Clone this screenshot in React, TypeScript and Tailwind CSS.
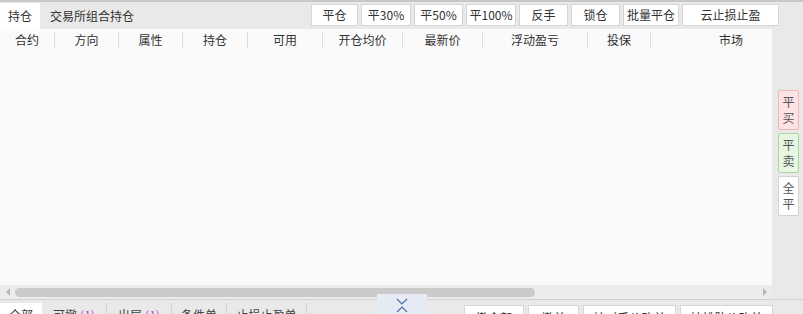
const cols = [
  { label: '合约', w: 'w-[55px]' },
  { label: '方向', w: 'w-[64px]' },
  { label: '属性', w: 'w-[64px]' },
  { label: '持仓', w: 'w-[65px]' },
  { label: '可用', w: 'w-[75px]' },
  { label: '开仓均价', w: 'w-[80px]' },
  { label: '最新价', w: 'w-[80px]' },
  { label: '浮动盈亏', w: 'w-[105px]' },
  { label: '投保', w: 'w-[63px]' },
  { label: '市场', w: 'w-[160px]' },
];

const topButtons = [
  { label: '平仓', w: 'w-[47px]' },
  { label: '平30%', w: 'w-[50px]' },
  { label: '平50%', w: 'w-[49px]' },
  { label: '平100%', w: 'w-[50px]' },
  { label: '反手', w: 'w-[49px]' },
  { label: '锁仓', w: 'w-[49px]' },
  { label: '批量平仓', w: 'w-[56px]' },
  { label: '云止损止盈', w: 'w-[97px]' },
];

const bottomTabs = [
  { label: '可撤', count: '(1)', w: 'w-[65px]' },
  { label: '出层', count: '(1)', w: 'w-[65px]' },
  { label: '条件单', count: '', w: 'w-[55px]' },
  { label: '止损止盈单', count: '', w: 'w-[80px]' },
];

const bottomButtons = [
  { label: '撤全部', w: 'w-[60px]' },
  { label: '撤单', w: 'w-[51px]' },
  { label: '按对手价改单', w: 'w-[93px]' },
  { label: '按排队价改单', w: 'w-[93px]' },
];

export default function App() {
  return (
    <div className="relative w-[803px] h-[314px] overflow-hidden bg-[#e9e9e9] flex flex-col font-['Noto_Sans_CJK_SC',sans-serif] text-[12px] text-[#333] border-t-2 border-[#c8c8c8]">
      {/* top tabs + actions */}
      <div className="h-[27px] flex items-start justify-between pt-[1px]">
        <div className="flex h-[26px] items-center">
          <div className="h-full w-[40px] bg-white flex items-center justify-center">持仓</div>
          <div className="pl-[10px]">交易所组合持仓</div>
        </div>
        <div className="flex gap-[3px] pt-[1px] pr-[24px]">
          {topButtons.map((b) => (
            <div
              key={b.label}
              className={`${b.w} h-[22px] bg-white border border-[#d6d6d6] flex items-center justify-center leading-none`}
            >
              {b.label}
            </div>
          ))}
        </div>
      </div>

      {/* grid + side actions */}
      <div className="flex flex-1 min-h-0">
        <div className="w-[772px] flex flex-col bg-[#fafafa]">
          <div className="h-[22px] flex items-center overflow-hidden whitespace-nowrap">
            {cols.map((c, i) => (
              <div
                key={c.label}
                className={`${c.w} shrink-0 text-center h-[16px] leading-[16px] ${i < cols.length - 1 ? 'border-r border-[#dedede]' : ''}`}
              >
                {c.label}
              </div>
            ))}
          </div>
          <div className="flex-1" />
          <div className="h-[14px] bg-[#ececec] flex items-center">
            <div className="w-[15px] flex justify-center">
              <div className="w-0 h-0 border-y-[4px] border-y-transparent border-r-[4px] border-r-[#b5b5b5]" />
            </div>
            <div className="w-[520px] h-[9px] rounded-full bg-[#cacaca]" />
            <div className="flex-1" />
            <div className="w-[15px] flex justify-center">
              <div className="w-0 h-0 border-y-[4px] border-y-transparent border-l-[4px] border-l-[#b5b5b5]" />
            </div>
          </div>
        </div>
        <div className="flex-1 flex flex-col items-center pt-[61px] pl-[2px] gap-[3px]">
          <div className="w-[21px] h-[40px] bg-[#fde3e3] border border-[#f3b6b6] rounded-[2px] flex flex-col items-center justify-center leading-[16px] text-[#555]">
            <span>平</span>
            <span>买</span>
          </div>
          <div className="w-[21px] h-[40px] bg-[#e7f6e1] border border-[#a9d99a] rounded-[2px] flex flex-col items-center justify-center leading-[16px] text-[#555]">
            <span>平</span>
            <span>卖</span>
          </div>
          <div className="w-[21px] h-[40px] bg-white border border-[#d2d2d2] rounded-[2px] flex flex-col items-center justify-center leading-[16px] text-[#555]">
            <span>全</span>
            <span>平</span>
          </div>
        </div>
      </div>

      {/* bottom tabs + order actions */}
      <div className="h-[15px] border-t border-[#d0d0d0] flex items-start justify-between pt-[3px]">
        <div className="flex h-[20px]">
          <div className="w-[42px] h-full bg-white flex items-start justify-center pt-[4px] leading-[16px]">全部</div>
          {bottomTabs.map((t) => (
            <div
              key={t.label}
              className={`${t.w} h-full border-r border-[#d4d4d4] flex items-start justify-center pt-[4px] leading-[16px] text-[#444]`}
            >
              {t.label}
              {t.count && <span className="ml-[3px] text-[#c04fc4]">{t.count}</span>}
            </div>
          ))}
        </div>
        <div className="flex gap-[4px] pr-[30px] pt-[2px]">
          {bottomButtons.map((b) => (
            <div
              key={b.label}
              className={`${b.w} h-[22px] bg-white border border-[#d6d6d6] flex items-start justify-center pt-[4px] leading-[16px]`}
            >
              {b.label}
            </div>
          ))}
        </div>
      </div>

      {/* collapse handle */}
      <div className="absolute left-[377px] top-[292px] w-[50px] h-[22px] bg-[#e6eaf2] flex flex-col items-center justify-center gap-[1px]">
        <svg width="12" height="7" viewBox="0 0 12 7" fill="none" stroke="#4a6fa8" strokeWidth="1.2">
          <path d="M1 1 L6 6 L11 1" />
        </svg>
        <svg width="12" height="7" viewBox="0 0 12 7" fill="none" stroke="#4a6fa8" strokeWidth="1.2">
          <path d="M1 6 L6 1 L11 6" />
        </svg>
      </div>
    </div>
  );
}
